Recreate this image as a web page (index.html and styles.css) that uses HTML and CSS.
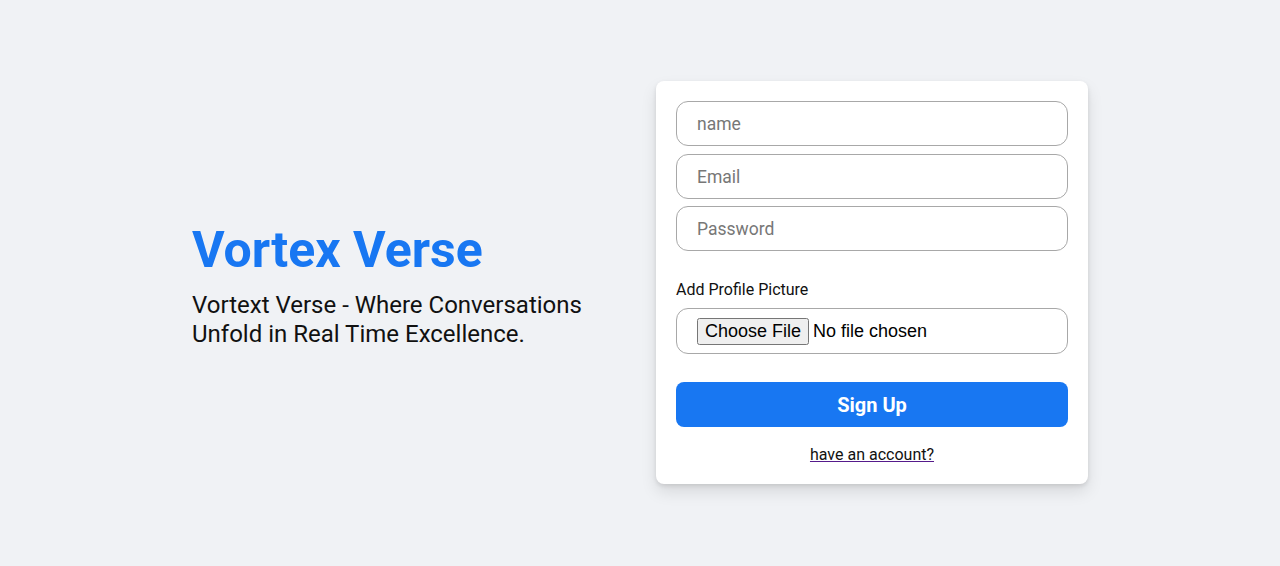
FILE: index.html
```html
<!DOCTYPE html>
<html lang="en">
<head>
<meta charset="utf-8">
<title>Vortex Verse - Sign Up</title>
<link rel="stylesheet" href="styles.css">
</head>
<body>
<main class="page">
  <section class="intro">
    <h1 class="brand">Vortex Verse</h1>
    <p class="tagline">Vortext Verse - Where Conversations Unfold in Real Time Excellence.</p>
  </section>
  <section class="card">
    <form class="form">
      <input class="field" type="text" placeholder="name">
      <input class="field" type="email" placeholder="Email">
      <input class="field" type="password" placeholder="Password">
      <label class="label" for="avatar">Add Profile Picture</label>
      <input class="file" id="avatar" type="file">
      <button class="submit" type="button">Sign Up</button>
      <a class="link" href="#">have an account?</a>
    </form>
  </section>
</main>
</body>
</html>
```
FILE: styles.css
```css
* { box-sizing: border-box; }
html, body { margin: 0; padding: 0; }
body {
  background: #f0f2f5;
  font-family: Roboto, "Liberation Sans", Arial, sans-serif;
  color: #111;
  height: 566px;
}
.page {
  height: 566px;
  display: flex;
  align-items: center;
  justify-content: center;
}
.intro {
  width: 400px;
  margin-right: 64px;
  margin-top: 3px;
}
.brand {
  margin: 0;
  color: #1877f2;
  font-size: 50px;
  font-weight: 700;
  line-height: 58px;
}
.tagline {
  margin: 12px 0 0;
  font-size: 24px;
  line-height: 29px;
  font-weight: 400;
}
.card {
  width: 432px;
  background: #fff;
  border-radius: 8px;
  box-shadow: 0 2px 4px rgba(0,0,0,.1), 0 8px 16px rgba(0,0,0,.1);
  padding: 20px;
  margin-top: -1px;
}
.form {
  display: flex;
  flex-direction: column;
}
.field {
  height: 45px;
  width: 100%;
  border: 1px solid #a8a8a8;
  border-radius: 12px;
  padding: 0 20px;
  font-family: Roboto, sans-serif;
  font-size: 17.5px;
  color: #111;
  background: #fff;
  margin-bottom: 8px;
  outline: none;
}
.field::placeholder { color: #777; }
.field:nth-of-type(2) { margin-bottom: 7px; }
.label {
  margin-top: 22px;
  font-size: 16px;
  line-height: 18px;
  color: #111;
}
.file {
  margin-top: 9px;
  height: 46px;
  width: 100%;
  border: 1px solid #a8a8a8;
  border-radius: 12px;
  padding: 9px 20px;
  font-family: "Liberation Sans", Arial, sans-serif;
  font-size: 18px;
  color: #000;
  background: #fff;
}
.submit {
  margin-top: 28px;
  height: 45px;
  width: 100%;
  border: none;
  border-radius: 8px;
  background: #1877f2;
  color: #fff;
  font-family: Roboto, sans-serif;
  font-size: 20px;
  font-weight: 700;
}
.link {
  margin-top: 18px;
  align-self: center;
  font-size: 16px;
  line-height: 19px;
  color: #111;
  text-decoration: underline;
  text-decoration-color: #551a8b;
}
```
